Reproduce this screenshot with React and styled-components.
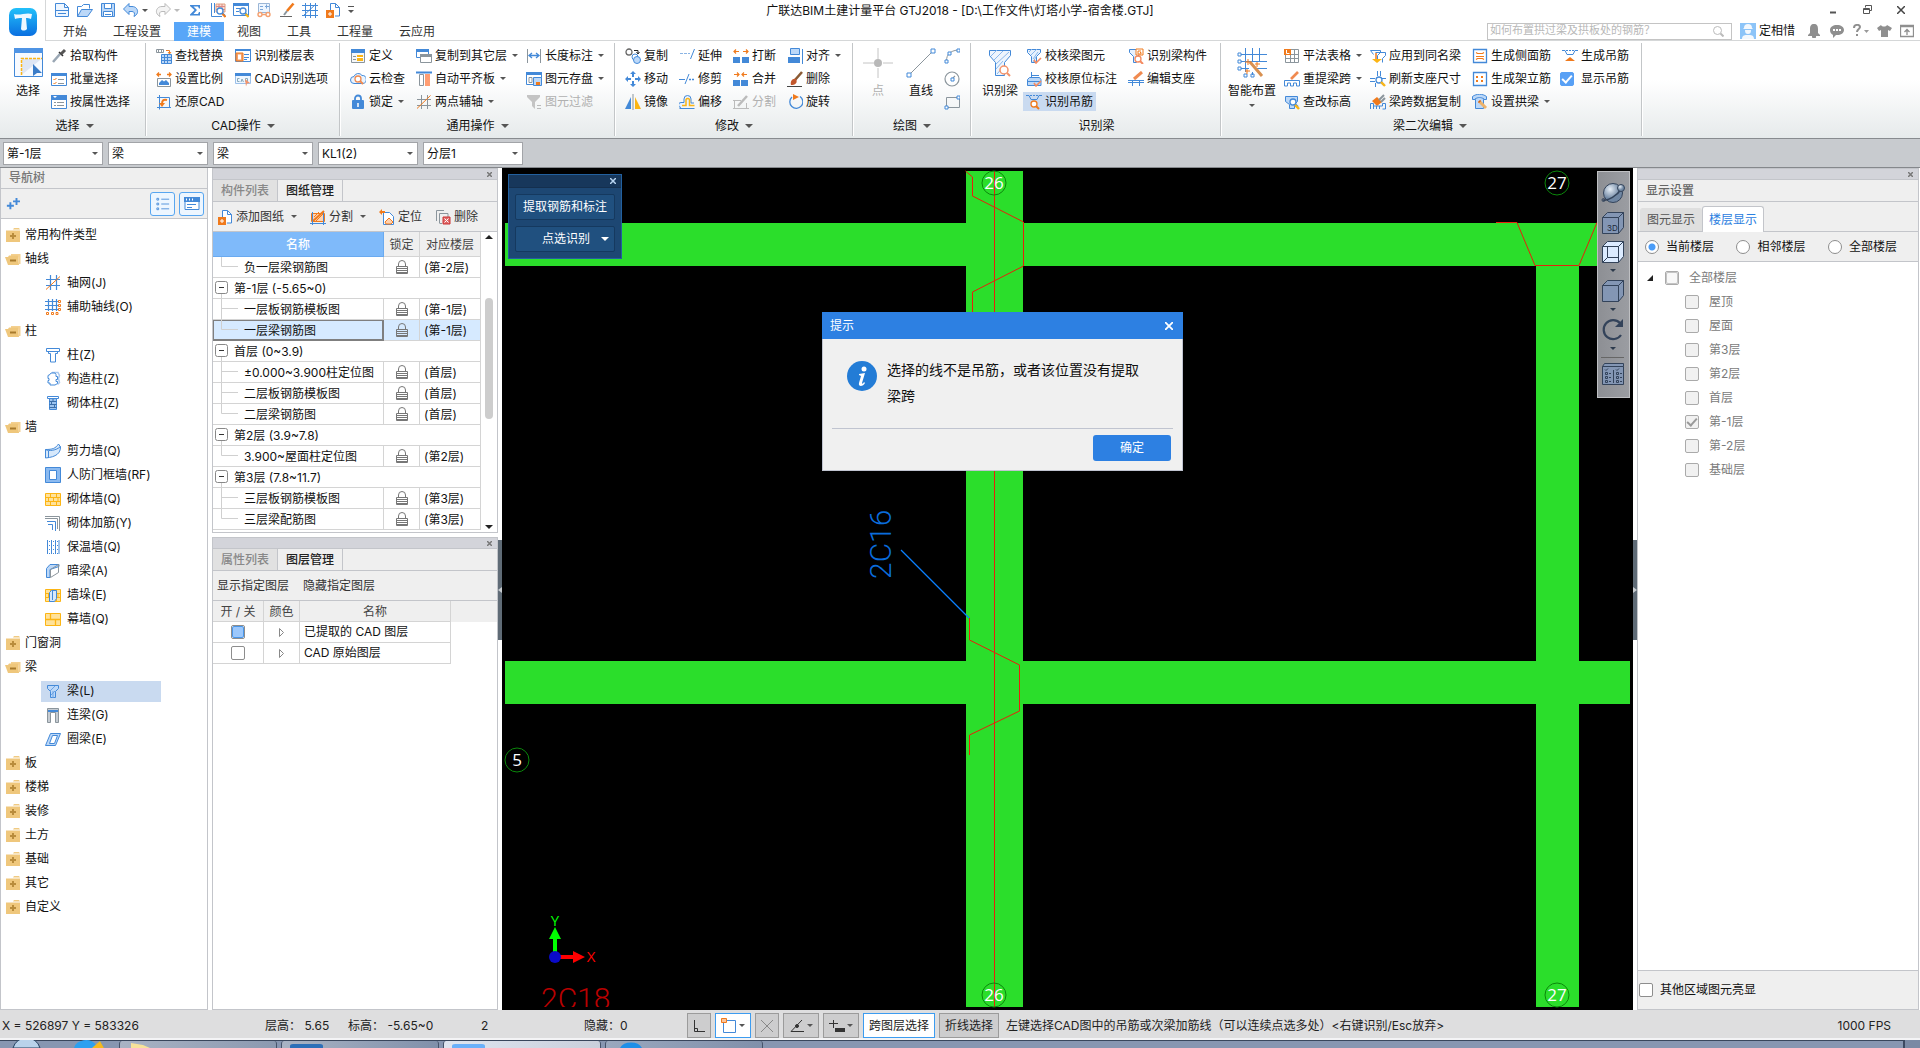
import React from "react";
import styled, { createGlobalStyle, css } from "styled-components";

const GlobalStyle = createGlobalStyle`
  * { box-sizing: border-box; }
  html, body { margin: 0; padding: 0; }
  body, button, input, select, table {
    font-family: Inter, "Noto Sans CJK SC", sans-serif;
    font-size: 12px;
    line-height: 16px;
    color: #111;
  }
  button { background: none; border: 0; padding: 0; white-space: nowrap; }
  ul { list-style: none; margin: 0; padding: 0; }
`;

const B = "#4389d8";
const L = "#bcd8f8";
const O = "#f07a1c";
const G = "#8b959c";
const K = "#33435a";
const Y = "#fcb514";

const line = (d, stroke = B, width = 1) => (
  <path d={d} stroke={stroke} strokeWidth={width} fill="none" />
);
const shape = (d, fill = B, stroke = "none") => (
  <path d={d} fill={fill} stroke={stroke} />
);
const magnifier = (x, y, color = O) => (
  <>
    <circle cx={x} cy={y} r="3" fill="#fff" stroke={color} strokeWidth="1.3" />
    <path d={`M${x + 2} ${y + 2}l3 3`} stroke={color} strokeWidth="2" />
  </>
);
const cube = (face) => (
  <>
    {shape("M1.5 6.5l5-5h16l-5 5z", face, K)}
    {shape("M17.5 6.5l5-5v15l-5 6z", face, K)}
    {shape("M1.5 6.5h16v16h-16z", face, K)}
  </>
);
const bricks = (
  <>
    {shape("M.5 2.5h15v12H.5z", "#ffe29a", Y)}
    {line("M.5 6.5h15M.5 10.5h15M5.5 2.5v4M11.5 2.5v4M3.5 6.5v4M8.5 6.5v4M13 6.5v4M5.5 10.5v4M11.5 10.5v4", Y)}
  </>
);

const icons = {
  newFile: <>{shape("M1.5 1.5h9l4 4v9h-13z", "#eef6ff", B)}{line("M10.5 1.5v4h4M1.5 8.5h13M4 11.5h8")}</>,
  open: <>{shape("M.5 14.5v-10h4l2-2h6v4", "#fff", B)}{shape("M.5 14.5l4-7h11l-5 7z", L, B)}</>,
  save: <>{shape("M1.5 1.5h13v13h-13z", L, B)}{shape("M4.5 1.5h7v5h-7zM3.5 9.5h9v5h-9z", "#fff", B)}{line("M5 12.5h6")}</>,
  undo: <>{shape("M6 1.5v3h3c4 0 6 3 5.500 6-.5 2-2 3-3.500 4 1-3 .5-5-2-5H6v3L.5 7z", L, B)}</>,
  redo: <>{shape("M10 1.500v3H7c-4 0-6 3-5.500 6 .5 2 2 3 3.500 4-1-3-.5-5 2-5h3v3L15.500 7z", "#f4f4f4", "#bbb")}</>,
  sigma: shape("M3 3h10v3.500h-1l-1-2H6.500l3.500 3.500-3.500 4H11l1-2h1v3.500H3v-1l4.500-4.500L3 4z"),
  sheetFind: <>{line("M1.500 1v13.500H12M4.500 1v10")}{shape("M6 2h9v8H6z", "#f7ded0", "#e0a080")}{line("M6 4.500h9M6 7.500h9M9 2v8M12 2v8", "#d88")}{magnifier(10, 9, B)}{line("M12.500 12l3 3", O, 2)}</>,
  windowFind: <>{shape("M.5 1.500h15v12H.5z", "#fff", B)}{shape("M0 1h16v3H0z")}{line("M3 6.500h4M3 9.500h3")}{magnifier(10, 9, B)}{line("M12.500 12l3 3", Y, 2)}</>,
  glasses: <>{shape("M2.500 1.500h11v9h-11z", "#eef6ff", "#9bb6d6")}{line("M4 4.500h3M9 4.500h4M4 7.500h3M10.500 2.500v4", "#7aa6d8")}{line("M2 12.500a2 2 0 104 0 2 2 0 10-4 0M10 12.500a2 2 0 104 0 2 2 0 10-4 0M6 12.500h4", "#f4a070", 1.400)}</>,
  brush: <>{line("M14.500 1.500L8 9", O, 2.600)}{line("M8 9l-3 4", G, 2)}{line("M1 14.500h12", "#666")}</>,
  grid: <>{line("M3.500 1v15M8.500 1v15M13.500 1v15M0 3.500h16M0 8.500h16M0 13.500h16M1 14L14 2")}</>,
  addPage: <>{shape("M5.500 9v-7.500h5l4 4v8.500H10", "#fff", B)}{line("M10.500 1.500v4h4")}{shape("M1 8h8v8H1z", O)}{line("M5 10v4M3 12h4", "#fff")}</>,
  pipette: <>{line("M2 14l7-8", "#9aa7b4", 2.500)}{line("M8 4l4 4", "#333", 1.600)}{line("M10 6l4-4", "#555", 3)}</>,
  batch: <>{shape("M.5 2.500h15v12H.5z", "#fff", B)}{shape("M0 2h16v3H0z")}{line("M2.500 8l1 1 2-2M2.500 12l1 1 2-2", O)}{line("M7 8.500h6M7 12.500h6", G)}</>,
  attribute: <>{shape("M.5 1.500h15v13H.5z", "#fff", B)}{shape("M0 1h16v5H0z")}{shape("M2 2h4l-2 2z", "#fff")}{line("M3 8.500h2M3 11.500h2M6 8.500h7M6 11.500h7", G)}</>,
  findReplace: <>{line("M.5 1.500h7v3h-7zM2.500 1.500v3M5.500 1.500v3", G)}{line("M10 2.500h3.500v3M12 4l1.500 2L15 4", O)}{shape("M5.500 6.500h10v9h-10z", L, B)}{line("M8.500 7v8M11.500 7v8M6 9.500h9M6 12.500h9")}</>,
  scale: <>{line("M1 3.500h4M3 1.500l-2 2 2 2M15 3.500h-4M13 1.500l2 2-2 2", O, 1.300)}{shape("M1.500 7.500h13v8h-13z", "#fff", G)}{shape("M3 14v-2l3-3 2 1.500L10 9l3 3v2z")}</>,
  restore: <>{line("M3.500 1v14.500M1 3.500h12.500v10M1 13.500h14")}{line("M6 10c0-4 2-5 5-4", O, 2)}{shape("M3 9h6l-3 4z", O)}</>,
  floorTable: <>{shape("M.5 1.500h15v12H.5z", "#fff", B)}{shape("M0 1h16v2H0z")}{shape("M1 5h7v8H1z", "#f4a06c", O)}{shape("M3 6.500h3v5H3z", "#fff")}{line("M9 6.500h5M9 9.500h5M9 11.500h3")}</>,
  cadOption: <>{shape("M.5 2.500h15v10H.5z", "#eef6ff", "#9cc0ea")}{shape("M0 2h16v3H0z")}{line("M4.500 7.500h-2v3h2M6 11l1-3 1.500 3M10.500 7.500v3h2v-3z", "#8ab")}{shape("M10 8l5 4-3 .5-1 3z", "#f4936a")}</>,
  define: <>{shape("M1.500 2.500h13v12h-13z", "#f4f7fa", G)}{shape("M1 1h14v4H1z")}{line("M3 8.500h3M3 11.500h3", G)}{shape("M7 7h6v6H7z", Y)}{line("M7 9.500h6", "#fff")}</>,
  cloud: <>{shape("M4 12.500a3.500 3.500 0 010-7 4.500 4.500 0 018-1 4 4 0 01.5 8z", "#e9f4ff", B)}{magnifier(8, 8, "#f08a50")}</>,
  lock: <>{line("M5 7V4.500a3 3 0 016 0V7", B, 1.800)}{shape("M3 6h10a1 1 0 011 1v7a1 1 0 01-1 1H3a1 1 0 01-1-1V7a1 1 0 011-1z")}{line("M8 9v4", "#fff", 1.500)}</>,
  copyFloor: <>{shape("M.5 1.500h12v8H.5z", "#fff", B)}{shape("M0 1h13v3H0z")}{shape("M4.500 6.500h11v8h-11z", "#fff", G)}{shape("M4 6h12v3H4z", G)}</>,
  alignSlab: <>{line("M0 1.500h16", B, 2)}{line("M3.500 3.500h4v11h-4z", G)}{shape("M9 3h5v12H9z", "#ff9d72")}</>,
  auxAxis: <>{line("M5.500 1v14M11.500 1v14M1 5.500h14M1 11.500h14", G)}{line("M1 14.500L14.500 1.500", O)}</>,
  dimension: <>{line("M1.500 1v14M14.500 1v14", G)}{line("M3 7.500h10M6 5L3 7.500 6 10M10 5l3 2.500-3 2.500", B, 1.300)}</>,
  saveElement: <>{shape("M.5 1.500h15v12H.5z", "#fff", B)}{shape("M0 1h16v3H0z")}{line("M3 6.500h3v5H3z", G)}{shape("M7.500 6.500h8v8h-8z", L, B)}{shape("M10 11h4v3h-4z", O)}</>,
  filter: <>{shape("M1 1h13v2L9 8v7l-3-3V8L1 3z", "#c4c4c4")}{line("M11 11.500h4M11 14.500h4", "#bbb")}</>,
  copy: <>{line("M1 4a3 3 0 106 0 3 3 0 10-6 0", "#666", 1.300)}{line("M9 2.500h4v3M11.500 4L13 6l1.500-2", "#222")}<circle cx="10" cy="9" r="3" fill="#fff" stroke={B} /><circle cx="12" cy="12" r="3.500" fill={L} stroke={B} /></>,
  move: <>{line("M8 2v4M8 10v4M2 8h4M10 8h4", B, 2)}{shape("M8 0l3 3H5zM8 16l3-3H5zM0 8l3-3v6zM16 8l-3-3v6z")}</>,
  mirror: <>{shape("M6 3v12H0z")}{shape("M10 3v12h6z", Y)}{line("M8 0v16", G)}</>,
  extend: <>{line("M0 5.500h11", "#8ab4e4")}<path d="M0 5.500h12" stroke="#fff" strokeDasharray="1 3" />{line("M15.500 1l-4 10")}</>,
  trim: <>{line("M0 8.500h6M6 13L10 3")}<path d="M10 8.500h6" stroke={B} strokeWidth="1.500" strokeDasharray="2 1" /></>,
  offset: <>{shape("M2 13.500a2 2 0 010-5h3V5a3.500 3.500 0 017 0v4h3M.5 14.500h15", "#eaf3ff", B)}{line("M3 11.500h4V5.500a2 2 0 013.500 0v6h5", Y, 1.500)}</>,
  breakIt: <>{shape("M0 9h7v6H0zM9 9h7v6H9z")}{line("M1 3.500h5M3 1.500l-2 2 2 2M15 3.500h-5M13 1.500l2 2-2 2", O, 1.200)}</>,
  merge: <>{shape("M0 9h7v6H0zM8 9h7v6H8z")}{line("M1 3.500h5M4 1.500l2 2-2 2M14 3.500H9M11 1.500l-2 2 2 2", O, 1.200)}</>,
  split: <>{line("M1.500 6v8.500h12V9M0 14.500h16M0 6.500h8", "#bbb")}{line("M5 12l9-10", "#bbb", 2.500)}</>,
  alignTo: <>{shape("M3.500 .500h9v6h-9z", L, B)}{shape("M1 9h12v6H1z")}{line("M15.500 1v15")}</>,
  erase: <>{line("M15 1L8 9", "#8a5a33", 2.500)}{shape("M9 8c-4-1-6 3-5 6 4 0 7-2 5-6z", "#c2562c")}{line("M0 15.500h15", "#444")}</>,
  rotate: <>{line("M5 3a6.500 6.500 0 108-.5", B, 1.300)}{shape("M6 0l6 3-6 3z", O)}</>,
  arc: <>{line("M2.500 13c0-7 4-10 11-11", G)}{shape("M1 12h3v3H1zM4 4h3v3H4zM13 1h3v3h-3z", "#fff", B)}</>,
  circle: <>{line("M1 8a7 7 0 1014 0A7 7 0 101 8M8 8l3-3", G, 1.200)}{shape("M7 7h3v3H7z", "#fff", B)}</>,
  rect: <>{line("M2.500 3.500h13v10h-13z", G)}{shape("M1 12h3v3H1zM13 2h3v3h-3z", "#fff", B)}</>,
  checkBeam: <>{shape("M1.500 1.500h13v3l-4 4v6h-5v-6l-4-4z", "#e6f1fd", B)}{line("M3 4l3-3M5 7l6-6M7 11l5-7M7 14l3-5", "#8ab8ec")}{line("M8 12l2 3 5-5", "#f48a60", 1.600)}</>,
  checkLabel: <>{line("M5.500 7V1M5 4.500h8")}{shape("M1.500 8.500l2-2h10l1.500 2v6h-13.500z", L, B)}{line("M1 10.500h13")}{line("M8 12l2 3 5-5", "#f48a60", 1.600)}</>,
  findRebar: <>{line("M0 1.500h3l2 4h6l2-4h3")}<path d="M4 1.500h9" stroke={B} strokeDasharray="2 1" />{magnifier(8, 10)}</>,
  beamComp: <>{shape("M1.500 1.500h9v8l-2 5h-3v-6l-4-4z", "#e6f1fd", B)}{shape("M8 1h7v6H8z", "#fff", O)}{line("M13 3h-3v3h3V4.500h-1", O)}{magnifier(10, 11, "#f48a60")}</>,
  editSupport: <>{line("M14 1L6 8", "#f08a50", 3)}{line("M0 9.500h16M0 11.500h16M4.500 9v6M11.500 9v6")}</>,
  tableL: <>{shape("M1.500 1.500h13v13h-13z", "#fff", G)}{line("M6.500 7v8M10.500 2v12M2 6.500h12M2 10.500h12", G)}{shape("M0 1h7v6H0z", O)}{line("M2.500 2v3.500h3", "#fff")}</>,
  respan: <>{line("M14 1L7 8", "#f08a50", 2.600)}{line("M.5 15V9.500h15V15h-3v-3h-3v3h-3v-3h-3v3z")}</>,
  checkHeight: <>{shape("M1.500 2.500h12v5l-3 3v4h-5v-4l-4-3z", L, B)}{magnifier(9, 8, B)}{line("M11 11l4 4", Y, 2.400)}</>,
  applySame: <>{line("M.5 2.500h10v2l-3 3v5M5.500 4.500h10v3l-3 3v4M.5 2.500l3 4")}{shape("M2 11h10l-5 4z", Y)}{line("M6 5v6", O, 1.500)}</>,
  refresh: <>{line("M7.500 0v5M10.500 0v5M0 7.500h5M0 10.500h5M12 7.500h4M5.500 12v4")}{magnifier(9, 9, B)}{line("M11 11l4 4", Y, 2.400)}</>,
  spanCopy: <>{shape("M2 7l5-4 5 5-5 4z", O)}{line("M9 6l5-5M11 8l4-4", G, 2)}{line("M.5 15V9.500h3V12h9V9.500h3V15h-3M3.500 15v-3M6.500 12v3M9.500 12v3")}</>,
  sideRebar: <>{line("M1.500 1.500h13v13h-13z", B, 1.300)}{line("M4 4.500l1.500 1h5l1.500-1M4 8.500h8M4 11.500l1.500-1h5l1.500 1", O, 1.200)}</>,
  topRebar: <>{line("M1.500 1.500h13v13h-13z", B, 1.300)}{shape("M4 5h2v2H4zM9 5h2v2H9zM4 9h2v2H4zM9 9h2v2H9z", O)}</>,
  arch: <>{shape("M.5 5.500v-3c4-3 10-3 14 0v3h-3v9h-8v-9z", L, B)}{line("M3 5c3-2 6-2 9 0")}{line("M7 7l7 7", "#eeb36a", 3)}{line("M7 7l1 1", "#d2601a", 3)}</>,
  hangRebar: <>{line("M0 2.500h3l2 4h6l2-4h3")}<path d="M4 2.500h9" stroke={B} strokeDasharray="2 1" />{shape("M8 9l5 4H3z", O)}</>,
  splitPaper: <>{shape("M1.500 4.500h13v8h-13z", "#ffd2b0", O)}{line("M0 14.500h16M2.500 3v13M13.500 3v13")}{line("M3 12L14 2", O, 2)}{line("M4 8l5-5M6 12l7-7", O)}</>,
  locate: <>{shape("M4.500 3.500h6l4 4v8h-10z", "#fff", B)}{shape("M0 3l3-3v2h3v2H3v2z", O)}{shape("M6 13l4-4 4 4-2 2H7z", "#ffd2b0", O)}</>,
  removePaper: <>{line("M1.500 12V1.500H9M4.500 14V4.500H13V8M4.500 14.500H7", G)}{shape("M8 8h7v7H8z", "#e06a6a", "#c33")}{line("M9.500 9.500l4 4M13.500 9.500l-4 4", "#fff")}</>,
  folderPlus: <>{shape("M8 2.500l1-1.500h5l1 1.500z", "#f0ca82")}{shape("M1 3.500h14V15H1z", "#efc77c")}{line("M8 6v6M5 9h6", "#b98c3c", 2)}</>,
  folderMinus: <>{shape("M6 3h9.500v10H14l-1-8H6z", "#f4d090")}{shape("M0 6h3l1-1.500h9l1 9.500H3z", "#efc77c")}{line("M5 9.500h6", "#a87a2c", 2)}</>,
  axisNet: <>{line("M5.500 0v15M11.500 0v15M1 4.500h14M1 10.500h14", B, 1.200)}{line("M1 14.500L15 1.500", O)}</>,
  auxNet: <>{line("M3.500 0v12M7.500 0v12M11.500 0v12M0 2.500h13M0 6.500h13M0 10.500h13", B, 1.200)}{line("M13.500 1.500h2v2h-2zM13.500 5.500h2v2h-2zM13.500 9.500h2v2h-2zM1.500 13.500h2v2h-2zM6.500 13.500h2v2h-2zM11 13.500h2v2h-2z", O)}</>,
  column: <>{line("M1.500 1.500h13v3h-13zM3.500 4.500h9v2h-2v8.500h-5V6.500h-2z")}</>,
  structColumn: <>{line("M7 1.500h6l1.500 3-1 3 1 4-2 2", "#a8c8ee", 1.500)}{shape("M5 3.500L6 2h4l1 1.500v2h1.500v3H11v2h1.500v2L10 14H5v-2H3V9.500h1v-2H3v-3z", "#fff", B)}</>,
  brickColumn: <>{line("M2.500 1.500h11v2h-11z")}{shape("M4.500 3.500h7v11h-7z", "#9cc4f0", B)}{line("M4.500 6.500h7M4.500 9.500h7M4.500 12.500h7M8 4v3M6.500 7v3M9.500 10v3", "#3b6ea8")}</>,
  shearWall: <>{shape("M.5 6.500c7 0 10-1 13-5.500l2 3c0 6-4 10-15 11z", "#d6e8fb", B)}{line("M.5 6.500c3 2 11 1 15-3M3.500 8v7")}</>,
  frameWall: <>{shape("M.5 .500h15v15H.5z", "#8bbaf0", B)}{shape("M4.500 3.500h7v9h-7z", "#fff", B)}</>,
  brickWall: bricks,
  wallRebar: <>{line("M0 1.500h14.500V16M0 3.500h12.500V14", G)}{line("M2 6.500h8.500V16M3 9.500h4.500V15")}</>,
  insulWall: <>{line("M2.500 1v14M6.500 1v14M10.500 1v14M14 1v14")}<path d="M4.500 2v13M8.500 2v13M12.500 2v13" stroke={B} strokeDasharray="1 3" /></>,
  hiddenBeam: <>{shape("M1.500 5.500L5 1.500h9v2l-9 3v8l-3.500 0z", L, B)}{line("M5.500 6.500l8-5v8l-8 5z", G)}</>,
  wallPier: <>{bricks}{shape("M4.500 5.500l2-2h5v8l-2 3h-5z", "#d6e8fb", B)}{line("M7.500 4v9")}</>,
  curtain: <>{shape("M.5 2.500h15v12H.5z", "#ffe29a", Y)}{line("M.5 8.500h15M5.500 2.500v6M10.500 8.500v6", Y, 1.300)}</>,
  beam: <>{shape("M2.500 2.500h11v3l-3 3v6h-5v-6l-3-3z", L, B)}{line("M5 8l5-5M6 12l4-4M8 8v7", "#6aa2e4")}</>,
  linkBeam: <>{shape("M2.500 1.500h11v14h-3v-10h-5v10h-3z", "#c6ccd2", G)}{shape("M3 3h10v2H3z", B)}</>,
  ringBeam: <>{shape("M5.500 2.500h10l-5 12H.5z", L, B)}{shape("M7.500 4.500h5l-3 8h-5z", "#fff", B)}</>,
  plusPlus: <>{line("M5 6v8M1 10h8M12 1v8M8 5h8", B, 2.200)}</>,
  listView: <>{line("M1 1.500h2v2H1zM1 7h2v2H1zM1 12.500h2v2H1zM6 2.500h9M6 8h9M6 13.500h9")}</>,
  cardView: <>{shape("M1 1.500h14v12H1z", "#fff", B)}{shape("M0 1h16v5H0z")}{line("M2 3.500h1M5 3.500h1M8 3.500h1", "#fff", 2)}{line("M3 8.500h9M3 11.500h5")}</>,
};

const Icon = ({ name, size = 16 }) => (
  <svg width={size} height={size} viewBox="0 0 16 16" fill="none" aria-hidden="true">
    {icons[name]}
  </svg>
);

const Caret = styled.i`
  flex: none;
  width: 0;
  height: 0;
  border: ${(p) => p.$size || 3}px solid transparent;
  border-top-color: ${(p) => p.$color || "#555"};
  border-bottom: 0;
`;

/* ---------- window header ---------- */

const Page = styled.div`
  display: flex;
  flex-direction: column;
  height: 100vh;
  overflow: hidden;
  background: #fff;
`;

const Header = styled.header`
  flex: none;
  display: grid;
  grid-template-columns: 46px 1fr auto 1fr 46px;
  grid-template-rows: 22px 19px;
`;

const Logo = styled.div`
  grid-row: span 2;
  display: flex;
  align-items: center;
  justify-content: center;
  padding-top: 3px;
  border-right: 1px solid #d5d7d8;
`;

const QuickBar = styled.div`
  display: flex;
  align-items: center;
  gap: 7px;
  padding: 0 0 2px 8px;
`;

const QuickButton = styled.button`
  display: flex;
  align-items: center;
  gap: 3px;
`;

const Title = styled.h1`
  margin: 0;
  font-size: 12px;
  font-weight: 400;
  line-height: 22px;
`;

const WindowControls = styled.div`
  grid-column: 4 / 6;
  display: flex;
  justify-content: flex-end;
  padding-right: 2px;

  button {
    width: 34px;
    height: 20px;
  }
`;

const TabRow = styled.div`
  grid-column: 2 / 6;
  display: flex;
  justify-content: space-between;
  border-bottom: 1px solid #d5d7d8;
  padding-right: 6px;
`;

const Tabs = styled.nav`
  display: flex;
  padding-left: 4px;
`;

const Tab = styled.button`
  height: 19px;
  padding: 0 13px;
  color: ${(p) => (p.$active ? "#fff" : "#333")};
  background: ${(p) => (p.$active ? "#58a6f8" : "none")};
`;

const Tools = styled.div`
  display: flex;
  align-items: center;
  gap: 8px;
`;

const SearchBox = styled.label`
  display: flex;
  align-items: center;
  width: 245px;
  height: 17px;
  padding-right: 7px;
  border: 1px solid #c4c4c4;

  input {
    flex: 1;
    min-width: 0;
    height: 15px;
    padding: 0 2px 3px;
    border: 0;
    outline: 0;
    font-size: 11px;
    background: none;
  }
  input::placeholder {
    color: #b8b8b8;
  }
`;

const User = styled.a`
  display: flex;
  align-items: center;
  gap: 3px;
  margin-right: 4px;
  color: #111;
  text-decoration: none;
`;

/* ---------- ribbon ---------- */

const Ribbon = styled.section`
  flex: none;
  display: flex;
  height: 98px;
  padding: 2px 0 2px;
  background: linear-gradient(#fff 0%, #fff 40%, #e6eaeb 100%);
  border-bottom: 1px solid #888b8f;
`;

const Group = styled.div`
  display: flex;
  flex-direction: column;
  min-width: ${(p) => p.$width}px;
  padding-left: ${(p) => p.$indent || 7}px;
  border-right: 1px solid #c3c6c8;
  box-shadow: 1px 0 #fff;
`;

const GroupBody = styled.div`
  display: flex;
  gap: 2px;
  padding-top: 1px;
`;

const Columns = styled.div`
  display: flex;
  gap: 5px;
`;

const Column = styled.div`
  display: grid;
  grid-auto-rows: 23px;
  align-items: center;
  justify-items: start;
`;

const SmallButton = styled.button`
  display: flex;
  align-items: center;
  gap: 3px;
  height: 19px;
  padding: 0 ${(p) => (p.$menu ? 0 : 3)}px 0 3px;
  color: ${(p) => (p.disabled ? "#b0b0b0" : "#111")};
  background: ${(p) => (p.$active ? "#c9daf0" : "none")};

  i {
    margin-left: 2px;
  }
`;

const BigButton = styled.button`
  display: flex;
  flex-direction: column;
  align-items: center;
  gap: 5px;
  align-self: flex-start;
  padding: 4px 3px 0;
  color: ${(p) => (p.disabled ? "#b0b0b0" : "#111")};

  & + & {
    margin-left: 5px;
  }
`;

const GroupLabel = styled.div`
  flex: 1;
  display: flex;
  align-items: center;
  justify-content: center;
  gap: 6px;
  padding: 2px 6px 0 0;
`;

const CheckItem = styled.label`
  display: flex;
  align-items: center;
  gap: ${(p) => p.$gap || 7}px;
  padding: 0 1px;
  color: ${(p) => (p.$muted ? "#7b7b7b" : "#111")};
`;

const CheckBox = styled.input.attrs({ type: "checkbox" })`
  appearance: none;
  display: grid;
  place-items: center;
  flex: none;
  width: 14px;
  height: 14px;
  margin: 0;
  border: 1px solid #8d8d8d;
  border-radius: 2px;
  background: ${(p) => (p.disabled ? "#f1f1f1" : "#fff")};

  &:disabled {
    border-color: #aaa;
  }
  &:checked::after {
    content: "";
    width: 8px;
    height: 4px;
    margin-top: -2px;
    border: solid #999;
    border-width: 0 0 2px 2px;
    transform: rotate(-48deg);
  }
  ${(p) =>
    p.$solid &&
    css`
      background: #58a0f5;
      border-color: #58a0f5;
      &:checked::after {
        border-color: #fff;
      }
    `}
  ${(p) =>
    p.$partial &&
    css`
      &::before {
        content: "";
        width: 10px;
        height: 10px;
        border: 1px solid ${p.disabled ? "#c4c4c4" : "#4a97ea"};
        border-radius: 2px;
        background: ${p.disabled ? "#f8f8f8" : "#9cc8fc"};
      }
    `}
`;

const ComboBar = styled.div`
  flex: none;
  display: flex;
  gap: 5px;
  height: 29px;
  padding: 3px 3px 0;
  background: #c8cbcf;
  border-bottom: 1px solid #85888c;
`;

const Combo = styled.label`
  display: flex;
  align-items: center;
  width: 100px;
  height: 23px;
  padding-right: 4px;
  background: #fff;
  border: 1px solid #a2a4a8;

  select {
    flex: 1;
    min-width: 0;
    appearance: none;
    height: 21px;
    padding: 0 3px;
    border: 0;
    background: none;
  }
`;

/* ---------- docked panels ---------- */

const Main = styled.main`
  flex: 1;
  min-height: 0;
  display: flex;
`;

const NavPanel = styled.aside`
  flex: none;
  width: 208px;
  margin-right: 4px;
  border: solid #c3c5ca;
  border-width: 0 1px 1px;
`;

const NavTitle = styled.div`
  height: 21px;
  padding: 2px 8px;
  color: #777;
  font-weight: 500;
  background: #efefef;
  border-bottom: 1px solid #c3c5ca;
`;

const NavTools = styled.div`
  display: flex;
  align-items: center;
  gap: 4px;
  height: 30px;
  padding: 0 3px 0 5px;
  background: #efefef;
  border-bottom: 1px solid #c3c5ca;

  button:first-child {
    display: flex;
    margin-right: auto;
  }
`;

const ViewButton = styled.button`
  display: flex;
  align-items: center;
  justify-content: center;
  width: 25px;
  height: 24px;
  border: 1px solid #58a6f0;
  border-radius: 3px;
  background: #edf6ff;
`;

const Tree = styled.ul`
  padding-top: 4px;
`;

const TreeRow = styled.li`
  display: flex;
  align-items: center;
  height: 24px;
  padding-left: ${(p) => (p.$leaf ? 40 : 3)}px;

  span {
    display: flex;
    align-items: center;
    gap: ${(p) => (p.$leaf ? 6 : 4)}px;
    height: 21px;
    width: ${(p) => (p.$leaf ? 120 : 160)}px;
    padding-left: ${(p) => (p.$leaf ? 4 : 1)}px;
    background: ${(p) => (p.$active ? "#c9daf0" : "none")};
  }
`;

const DockColumn = styled.div`
  flex: none;
  display: flex;
  flex-direction: column;
  gap: 4px;
  width: 286px;
`;

const Dock = styled.section`
  display: flex;
  flex-direction: column;
  flex: ${(p) => (p.$fill ? 1 : "none")};
  min-height: 0;
  border: 1px solid #c3c5ca;
  background: #fff;
`;

const DockStrip = styled.div`
  display: flex;
  justify-content: flex-end;
  align-items: center;
  height: 11px;
  padding-right: 5px;
  background: #d3d4da;
  border-bottom: 1px solid #c3c5ca;

  button {
    display: flex;
  }
`;

const DockTabs = styled.div`
  display: flex;
  height: 22px;
  background: #efefef;
  border-bottom: 1px solid #c3c5ca;
`;

const DockTab = styled.button`
  padding: 0 8px;
  width: 65px;
  border-right: 1px solid #c3c5ca;
  color: ${(p) => (p.$active ? "#222" : "#888")};
  font-weight: 500;
  background: ${(p) => (p.$active ? "#efefef" : "#e1e1e1")};
`;

const DockTools = styled.div`
  display: flex;
  align-items: center;
  gap: ${(p) => p.$gap}px;
  height: 30px;
  padding: 0 4px;
  background: #efefef;
  border-bottom: 1px solid #c3c5ca;

  button {
    display: flex;
    align-items: center;
    gap: 3px;
    color: #333;
  }
  i {
    margin-left: 4px;
  }
`;

const TableArea = styled.div`
  display: flex;
  padding-bottom: 2px;
`;

const DataTable = styled.table`
  table-layout: fixed;
  width: ${(p) => p.$width}px;
  border-collapse: separate;
  border-spacing: 0;

  th,
  td {
    height: 21px;
    padding: 0;
    border: solid #d4d4d4;
    border-width: 0 1px 1px 0;
    white-space: nowrap;
  }
  th {
    height: ${(p) => p.$head}px;
    padding-top: 2px;
    color: #444;
    font-weight: 400;
    background: #efefef;
  }
  svg {
    display: block;
    margin: 0 auto;
  }
`;

const SortedTh = styled.th`
  && {
    color: #fff;
    font-weight: 500;
    background: #7fbafa;
    border-color: #6aaaf0;
  }
`;

const DrawingRow = styled.tr`
  background: ${(p) => (p.$active ? "#d6eaff" : "#fff")};

  && td:last-child {
    padding: ${(p) => (p.$group ? "0" : "2px 0 0 4px")};
  }
  td:first-child {
    ${(p) => p.$active && "box-shadow: inset 0 0 0 1px #7f7f7f; border-color: #7f7f7f;"}
  }
`;

const NameCell = styled.div`
  display: flex;
  align-items: center;
  gap: 6px;
  height: 20px;
  padding-left: 2px;

  svg {
    margin: 0;
  }
  span {
    padding-top: 2px;
  }
`;

const Gutter = styled.div`
  flex: 1;
  display: flex;
  flex-direction: column;
  align-items: center;
  justify-content: space-between;
  padding: 3px 0 1px;
  background: #fff;
`;

const Thumb = styled.div`
  width: 8px;
  height: 121px;
  margin-top: -48px;
  border-radius: 4px;
  background: #cdcdcd;
`;

const LayerHead = styled.div`
  display: flex;
  align-items: flex-start;
  background: linear-gradient(#efefef 21px, #fff 21px);
`;

const Cell = styled.div`
  display: flex;
  align-items: center;
  justify-content: ${(p) => (p.$start ? "flex-start" : "center")};
  padding-left: ${(p) => (p.$start ? 4 : 0)}px;
`;

const Splitter = styled.div`
  flex: none;
  align-self: flex-start;
  display: flex;
  align-items: center;
  width: 4px;
  height: 100px;
  margin-top: 372px;
  background: #5f6b76;
`;

/* ---------- canvas ---------- */

const Canvas = styled.section`
  position: relative;
  flex: 1;
  min-width: 0;
  overflow: hidden;
  background: #000;

  > svg {
    display: block;
    width: 100%;
    height: 100%;
  }
`;

const FloatPanel = styled.div`
  position: absolute;
  left: 6px;
  top: 6px;
  width: 114px;
  padding-bottom: 6px;
  background: #1d4773;
  border: 1px solid #22609f;
`;

const FloatHead = styled.div`
  display: flex;
  justify-content: flex-end;
  align-items: center;
  height: 13px;
  padding-right: 5px;
  margin-bottom: 6px;
  background: #17375b;
  border-bottom: 1px solid #142f4e;

  button {
    display: flex;
  }
`;

const FloatButton = styled.button`
  display: flex;
  align-items: center;
  justify-content: ${(p) => (p.$menu ? "flex-end" : "center")};
  gap: 11px;
  width: 100px;
  height: 26px;
  margin: 0 6px ${(p) => (p.$menu ? 0 : 6)}px;
  padding: 0 5px;
  color: #fff;
  background: #20507f;
  border: 1px solid #15395f;
  border-radius: 2px;
`;

const ViewBar = styled.div`
  position: absolute;
  right: 3px;
  top: 3px;
  display: flex;
  flex-direction: column;
  align-items: center;
  width: 33px;
  height: 227px;
  padding: 10px 2px 0 0;
  background: linear-gradient(90deg, #8d8f94, #9b9da2);
  border: 1px solid #bfc0c3;

  button {
    display: flex;
    flex-direction: column;
    align-items: center;
    height: 39px;
    gap: 5px;
  }
  button:nth-child(-n + 2) {
    height: 29px;
  }
`;

const ViewBarRule = styled.hr`
  width: 23px;
  margin: 0 0 4px;
  border: 0;
  border-top: 1px solid #666;
`;

const Dialog = styled.div`
  position: absolute;
  left: 320px;
  top: 144px;
  width: 361px;
  background: #f0f0f0;
  border: solid #c0c4d0;
  border-width: 0 1px 1px;
`;

const DialogHead = styled.div`
  display: flex;
  align-items: center;
  justify-content: space-between;
  height: 27px;
  margin: 0 -1px;
  padding: 0 10px 0 8px;
  color: #fff;
  background: #2d80e2;

  button {
    display: flex;
  }
`;

const DialogBody = styled.div`
  display: flex;
  gap: 10px;
  height: 90px;
  margin: 0 9px;
  padding: 18px 24px 0 15px;
  border-bottom: 1px solid #c0c4d0;

  svg {
    flex: none;
    margin-top: 4px;
  }
  p {
    width: 256px;
    margin: 0;
    font-size: 14px;
    line-height: 26px;
  }
`;

const DialogFoot = styled.div`
  display: flex;
  justify-content: flex-end;
  padding: 6px 11px 9px;

  button {
    width: 78px;
    height: 26px;
    color: #fff;
    background: #2d80e2;
    border-radius: 3px;
  }
`;

/* ---------- display settings ---------- */

const SettingPanel = styled(Dock)`
  flex: none;
  width: 282px;
  margin-right: 1px;
`;

const SettingTitle = styled.div`
  height: 22px;
  padding: 3px 8px;
  color: #666;
  font-weight: 500;
  background: #efefef;
  border-bottom: 1px solid #c3c5ca;
`;

const SettingTabs = styled.div`
  display: flex;
  align-items: flex-end;
  height: 30px;
  padding-left: 2px;
  background: #efefef;
  border-bottom: 1px solid #c3c5ca;
`;

const SettingTab = styled.button`
  height: ${(p) => (p.$active ? 26 : 23)}px;
  margin-bottom: ${(p) => (p.$active ? -1 : 0)}px;
  width: 62px;
  color: ${(p) => (p.$active ? "#2b80e0" : "#555")};
  background: ${(p) => (p.$active ? "#fff" : "#dfdfdf")};
  border: solid ${(p) => (p.$active ? "#c3c5ca" : "#dfdfdf")};
  border-width: 1px 1px 0;
  border-radius: 3px 3px 0 0;
`;

const RadioRow = styled.div`
  display: flex;
  align-items: center;
  justify-content: space-between;
  height: 30px;
  padding: 0 21px 0 7px;
  background: #efefef;
  border-bottom: 1px solid #c3c5ca;

  label {
    display: flex;
    align-items: center;
    gap: 7px;
  }
  input {
    appearance: none;
    width: 14px;
    height: 14px;
    margin: 0;
    border: 1px solid #8d8d8d;
    border-radius: 50%;
    background: #fff;
  }
  input:checked {
    background: radial-gradient(#4a9cf8 3px, #fff 4px);
  }
`;

const FloorTree = styled.ul`
  flex: 1;
  padding-top: 4px;

  li {
    display: flex;
    align-items: center;
    height: 24px;
    padding-left: 46px;
  }
  li:first-child {
    padding-left: 9px;
    gap: 11px;
  }
`;

const SettingFoot = styled.div`
  display: flex;
  align-items: center;
  height: 39px;
  background: #efefef;
  border-top: 1px solid #c3c5ca;
`;

/* ---------- bottom bars ---------- */

const StatusBar = styled.footer`
  flex: none;
  display: flex;
  align-items: center;
  gap: 4px;
  height: 28px;
  padding: 3px 29px 0 2px;
  color: #222;
  background: #dededf;
  white-space: nowrap;
`;

const StatusText = styled.span`
  width: ${(p) => (p.$width ? p.$width + "px" : "auto")};
  margin-left: ${(p) => (p.$push ? "auto" : "0")};
  padding-left: ${(p) => p.$indent || 0}px;
`;

const StatusButton = styled.button`
  display: flex;
  align-items: center;
  justify-content: center;
  gap: 2px;
  height: 25px;
  padding: 0 5px;
  color: #222;
  background: ${(p) => (p.$active ? "#fff" : "#cdcdce")};
  border: 1px solid ${(p) => (p.$active ? "#3c9cf0" : "#9b9b9b")};
`;

const TaskBar = styled.div`
  flex: none;
  display: flex;
  gap: 4px;
  height: 10px;
  padding-left: 119px;
  border-top: 2px solid #f4f4f6;
  background: #8796b1;
  box-shadow: inset 0 1px #39465c;
  position: relative;

  > svg {
    position: absolute;
    left: 0;
    top: 0;
  }
`;

const TaskItem = styled.div`
  width: 158px;
  margin-top: 1px;
  border: solid #46536a;
  border-width: 0 1px;
  border-radius: 3px 3px 0 0;
  background: linear-gradient(90deg, ${(p) => p.$from}, ${(p) => p.$to});
`;

const Desktop = styled.div`
  width: 17px;
  margin-left: auto;
  border-left: 2px solid #3c4961;
  background: #7a89a4;
`;

const CloseMark = ({ size = 5, color = "#777", width = 1.5 }) => (
  <svg width={size} height={size} viewBox="0 0 8 8">
    <path d="M0 0l8 8M8 0L0 8" stroke={color} strokeWidth={(width * 8) / size} />
  </svg>
);

const quickIcons = [
  ["newFile"], ["open"], ["save"], ["undo", "#555"], ["redo", "#bbb"], ["sigma"],
  ["sheetFind"], ["windowFind"], ["glasses"], ["brush"], ["grid"], ["addPage"],
];

const tabs = ["开始", "工程设置", "建模", "视图", "工具", "工程量", "云应用"];

const bigIcons = {
  select: (
    <>
      {shape("M1.500 1.500h28v27h-28z", "#f7faff", B)}
      {shape("M1 0h29v5H1z", "#4f94e4")}
      <path d="M8.500 27V10.500H29" stroke={Y} strokeWidth="1.500" strokeDasharray="3 1" fill="#dfe6f4" />
      {shape("M20 16l9 9-5 0-4 3z", "#3b7cc8")}
    </>
  ),
  point: <>{line("M15 0v11M15 20v10M0 15h11M20 15h10", "#c4c4c4")}<circle cx="15" cy="15" r="4" fill="#b8b8b8" /></>,
  line: <>{line("M3 27L27 3", G)}{shape("M1 25h4v4H1zM25 1h4v4h-4z", "#fff", B)}</>,
  beam: (
    <>
      {shape("M4.500 2.500h21v5l-6 7v13h-9v-13l-6-7z", "#eef5fd", B)}
      {line("M6 8l6-6M9 12l9-9M11 16L24 4M11 21l7-8M12 26l7-8", "#8ab8ec")}
      <circle cx="19" cy="22" r="4" fill="#fff" stroke="#f4936a" strokeWidth="1.500" />
      {line("M22 25l3 3", "#f4936a", 2)}
    </>
  ),
  smart: (
    <>
      {line("M8.500 0v24M15.500 0v14M22.500 0v14M4 6.500h26M4 13.500h26M4 20.500h8M20 20.500h10M15.500 24v3", B)}
      {line("M1 5h3v3H1zM1 12h3v3H1zM1 19h3v3H1zM7 26h3v3H7zM14 26h3v3h-3z", B)}
      {line("M13 14l12 14", "#d89050", 3)}
      {line("M11 11v6M8 14h6M10 21v5M8 23h5M20 14v5M18 16h5", O)}
    </>
  ),
};

const ribbonGroups = [
  {
    label: "选择", width: 146, indent: 10,
    big: [{ text: "选择", icon: "select" }],
    columns: [[["pipette", "拾取构件"], ["batch", "批量选择"], ["attribute", "按属性选择"]]],
  },
  {
    label: "CAD操作", width: 194,
    columns: [
      [["findReplace", "查找替换"], ["scale", "设置比例"], ["restore", "还原CAD"]],
      [["floorTable", "识别楼层表"], ["cadOption", "CAD识别选项"]],
    ],
  },
  {
    label: "通用操作", width: 275,
    columns: [
      [["define", "定义"], ["cloud", "云检查"], ["lock", "锁定", "menu"]],
      [["copyFloor", "复制到其它层", "menu"], ["alignSlab", "自动平齐板", "menu"], ["auxAxis", "两点辅轴", "menu"]],
      [["dimension", "长度标注", "menu"], ["saveElement", "图元存盘", "menu"], ["filter", "图元过滤", "disabled"]],
    ],
  },
  {
    label: "修改", width: 238,
    columns: [
      [["copy", "复制"], ["move", "移动"], ["mirror", "镜像"]],
      [["extend", "延伸"], ["trim", "修剪"], ["offset", "偏移"]],
      [["breakIt", "打断"], ["merge", "合并"], ["split", "分割", "disabled"]],
      [["alignTo", "对齐", "menu"], ["erase", "删除"], ["rotate", "旋转"]],
    ],
  },
  {
    label: "绘图", width: 118,
    big: [{ text: "点", icon: "point", disabled: true }, { text: "直线", icon: "line" }],
    columns: [[["arc", ""], ["circle", ""], ["rect", ""]]],
  },
  {
    label: "识别梁", width: 250, indent: 8, plain: true,
    big: [{ text: "识别梁", icon: "beam" }],
    columns: [
      [["checkBeam", "校核梁图元"], ["checkLabel", "校核原位标注"], ["findRebar", "识别吊筋", "active"]],
      [["beamComp", "识别梁构件"], ["editSupport", "编辑支座"]],
    ],
  },
  {
    label: "梁二次编辑", width: 421, indent: 4,
    big: [{ text: "智能布置", icon: "smart", menu: true }],
    columns: [
      [["tableL", "平法表格", "menu"], ["respan", "重提梁跨", "menu"], ["checkHeight", "查改标高"]],
      [["applySame", "应用到同名梁"], ["refresh", "刷新支座尺寸"], ["spanCopy", "梁跨数据复制"]],
      [["sideRebar", "生成侧面筋"], ["topRebar", "生成架立筋"], ["arch", "设置拱梁", "menu"]],
      [["hangRebar", "生成吊筋"], ["check", "显示吊筋"]],
    ],
  },
];

const combos = ["第-1层", "梁", "梁", "KL1(2)", "分层1"];

const navTree = [
  ["folderPlus", "常用构件类型"],
  ["folderMinus", "轴线"],
  ["axisNet", "轴网(J)", 1],
  ["auxNet", "辅助轴线(O)", 1],
  ["folderMinus", "柱"],
  ["column", "柱(Z)", 1],
  ["structColumn", "构造柱(Z)", 1],
  ["brickColumn", "砌体柱(Z)", 1],
  ["folderMinus", "墙"],
  ["shearWall", "剪力墙(Q)", 1],
  ["frameWall", "人防门框墙(RF)", 1],
  ["brickWall", "砌体墙(Q)", 1],
  ["wallRebar", "砌体加筋(Y)", 1],
  ["insulWall", "保温墙(Q)", 1],
  ["hiddenBeam", "暗梁(A)", 1],
  ["wallPier", "墙垛(E)", 1],
  ["curtain", "幕墙(Q)", 1],
  ["folderPlus", "门窗洞"],
  ["folderMinus", "梁"],
  ["beam", "梁(L)", 1],
  ["linkBeam", "连梁(G)", 1],
  ["ringBeam", "圈梁(E)", 1],
  ["folderPlus", "板"],
  ["folderPlus", "楼梯"],
  ["folderPlus", "装修"],
  ["folderPlus", "土方"],
  ["folderPlus", "基础"],
  ["folderPlus", "其它"],
  ["folderPlus", "自定义"],
];

const drawings = [
  { name: "负一层梁钢筋图", floor: "(第-2层)", last: true },
  { group: "第-1层 (-5.65~0)" },
  { name: "一层板钢筋模板图", floor: "(第-1层)" },
  { name: "一层梁钢筋图", floor: "(第-1层)", last: true, active: true },
  { group: "首层 (0~3.9)" },
  { name: "±0.000~3.900柱定位图", floor: "(首层)" },
  { name: "二层板钢筋模板图", floor: "(首层)" },
  { name: "二层梁钢筋图", floor: "(首层)", last: true },
  { group: "第2层 (3.9~7.8)" },
  { name: "3.900~屋面柱定位图", floor: "(第2层)", last: true },
  { group: "第3层 (7.8~11.7)" },
  { name: "三层板钢筋模板图", floor: "(第3层)" },
  { name: "三层梁配筋图", floor: "(第3层)", last: true },
];

const floors = ["屋顶", "屋面", "第3层", "第2层", "首层", "第-1层", "第-2层", "基础层"];

const RibbonButton = ({ item: [icon, text, state] }) => {
  if (icon === "check") {
    return (
      <CheckItem>
        <CheckBox defaultChecked $solid />
        {text}
      </CheckItem>
    );
  }
  return (
    <SmallButton
      $active={state === "active"}
      $menu={state === "menu"}
      disabled={state === "disabled"}
      aria-label={text || icon}
    >
      <Icon name={icon} />
      {text}
      {state === "menu" && <Caret />}
    </SmallButton>
  );
};

const RibbonGroup = ({ group }) => (
  <Group $width={group.width} $indent={group.indent}>
    <GroupBody>
      {group.big?.map((b) => (
        <BigButton key={b.text} disabled={b.disabled}>
          <svg width="30" height="30" viewBox="0 0 30 30" fill="none">
            {bigIcons[b.icon]}
          </svg>
          {b.text}
          {b.menu && <Caret />}
        </BigButton>
      ))}
      <Columns>
        {group.columns.map((col, i) => (
          <Column key={i}>
            {col.map((item) => (
              <RibbonButton key={item[0]} item={item} />
            ))}
          </Column>
        ))}
      </Columns>
    </GroupBody>
    <GroupLabel>
      {group.label}
      {!group.plain && <Caret $size={4} />}
    </GroupLabel>
  </Group>
);

const WindowHeader = () => (
  <Header>
    <Logo>
      <svg width="30" height="30" viewBox="0 0 30 30">
        <defs>
          <linearGradient id="logo" x2="0" y2="1">
            <stop offset="0" stopColor="#22c0fa" />
            <stop offset="1" stopColor="#0a6fe0" />
          </linearGradient>
        </defs>
        <rect x="1" y="1" width="28" height="28" rx="7" fill="url(#logo)" />
        <path d="M6 7c6 2 12-2 18 0l-1 5c-2-1-3-1-5-1l1 11c-2 2-5 2-6 0l1-11c-3 0-5 0-7 1z" fill="#eef7ff" />
      </svg>
    </Logo>
    <QuickBar>
      {quickIcons.map(([name, caret]) => (
        <QuickButton key={name} aria-label={name}>
          <Icon name={name} />
          {caret && <Caret $color={caret} />}
        </QuickButton>
      ))}
      <QuickButton aria-label="more">
        <svg width="6" height="8" viewBox="0 0 6 8">
          <path d="M0 .500h6" stroke="#555" />
          <path d="M0 4h6L3 7z" fill="#555" />
        </svg>
      </QuickButton>
    </QuickBar>
    <Title>广联达BIM土建计量平台 GTJ2018 - [D:\工作文件\灯塔小学-宿舍楼.GTJ]</Title>
    <WindowControls>
      <button aria-label="minimize">
        <svg width="8" height="9"><path d="M1 7.500h6" stroke="#555" strokeWidth="2" /></svg>
      </button>
      <button aria-label="restore">
        <svg width="9" height="9" fill="none" stroke="#555"><path d="M2.500 2.500V.5h6v5h-2M.5 3.500h6v5h-6zM.5 4.500h6" /></svg>
      </button>
      <button aria-label="close"><CloseMark size={8} color="#444" /></button>
    </WindowControls>
    <TabRow>
      <Tabs>
        {tabs.map((t) => (
          <Tab key={t} $active={t === "建模"}>{t}</Tab>
        ))}
      </Tabs>
      <Tools>
        <SearchBox>
          <input aria-label="search" placeholder="如何布置拱过梁及拱板处的钢筋？" />
          <svg width="11" height="11" fill="none" stroke="#bbb"><circle cx="4.500" cy="4.500" r="4" /><path d="M7.500 7.500l3 3" strokeWidth="2" /></svg>
        </SearchBox>
        <User href="#">
          <svg width="16" height="16">
            <path d="M0 0h16v16H0z" fill="#8cc4f8" />
            <path d="M4 5a4 4 0 018 0l1 1H3zM5 7h6c0 3-1 4-3 4S5 10 5 7zM2 16c0-4 3-4 6-4s6 0 6 4z" fill="#f3f8fd" />
          </svg>
          定相惜
        </User>
        <svg width="14" height="14" fill="#8f8f8f"><path d="M7 0c3 0 4 2 4 5v4l2 2v1H1v-1l2-2V5c0-3 1-5 4-5zM5 12h4a2 2 0 01-4 1z" /></svg>
        <svg width="16" height="14"><path d="M8 1c4 0 7 2 7 5s-3 5-7 5H7l-3 3v-3C2 10 1 8 1 6c0-3 3-5 7-5z" fill="#8f8f8f" /><path d="M4 5h2v2H4zM7 5h2v2H7zM10 5h2v2h-2z" fill="#fff" /></svg>
        <svg width="16" height="14" fill="none"><path d="M1 4c0-4 6-4 6-1 0 2-3 2-3 5M4 10v2" stroke="#8f8f8f" strokeWidth="2" /><path d="M11 6h5l-2.500 3z" fill="#999" /></svg>
        <svg width="15" height="14" fill="#8f8f8f"><path d="M4 1c1 2 5 2 6 0l5 3-2 3-2-1v7H4V6L2 7 0 4z" /></svg>
        <svg width="14" height="14" fill="none" stroke="#8f8f8f"><path d="M.5 1.500h13v11H.5zM1 2.500h12M7 11V6M4.500 8L7 5.500 9.500 8" strokeWidth="1.300" /></svg>
      </Tools>
    </TabRow>
  </Header>
);

const Navigator = () => (
  <NavPanel>
    <NavTitle>导航树</NavTitle>
    <NavTools>
      <button aria-label="expand"><Icon name="plusPlus" size={14} /></button>
      <ViewButton aria-label="list"><Icon name="listView" size={14} /></ViewButton>
      <ViewButton aria-label="card"><Icon name="cardView" /></ViewButton>
    </NavTools>
    <Tree>
      {navTree.map(([icon, text, leaf]) => (
        <TreeRow key={text} $leaf={leaf} $active={text === "梁(L)"}>
          <span><Icon name={icon} />{text}</span>
        </TreeRow>
      ))}
    </Tree>
  </NavPanel>
);

const PadLock = () => (
  <svg width="12" height="14" fill="none" stroke="#777">
    <path d="M2.500 6V4a3.500 3.500 0 017 0v2M.5 6.500h11v7H.5zM1 8.500h10M1 10.500h10M1 12.500h10" />
  </svg>
);

const DrawingManager = () => (
  <Dock>
    <DockStrip><button aria-label="close"><CloseMark /></button></DockStrip>
    <DockTabs>
      <DockTab>构件列表</DockTab>
      <DockTab $active>图纸管理</DockTab>
    </DockTabs>
    <DockTools $gap={13}>
      <button><Icon name="addPage" />添加图纸<Caret /></button>
      <button><Icon name="splitPaper" />分割<Caret /></button>
      <button><Icon name="locate" />定位</button>
      <button><Icon name="removePaper" />删除</button>
    </DockTools>
    <TableArea>
      <DataTable $width={268} $head={25}>
        <colgroup><col width="171" /><col width="36" /><col width="61" /></colgroup>
        <thead>
          <tr><SortedTh>名称</SortedTh><th>锁定</th><th>对应楼层</th></tr>
        </thead>
        <tbody>
          {drawings.map((d) =>
            d.group ? (
              <DrawingRow key={d.group} $group>
                <td colSpan="3">
                  <NameCell>
                    <svg width="13" height="20" fill="none">
                      <path d="M6.500 16v4" stroke="#d0d0d0" />
                      <rect x=".5" y="3.500" width="12" height="12" rx="2" stroke="#888" />
                      <path d="M4 9.500h5" stroke="#333" />
                    </svg>
                    <span>{d.group}</span>
                  </NameCell>
                </td>
              </DrawingRow>
            ) : (
              <DrawingRow key={d.name} $active={d.active}>
                <td>
                  <NameCell>
                    <svg width="23" height="20" fill="none" stroke="#d0d0d0">
                      <path d={d.last ? "M6.500 0v9.500H23" : "M6.500 0v20M6.500 9.500H23"} />
                    </svg>
                    <span>{d.name}</span>
                  </NameCell>
                </td>
                <td><PadLock /></td>
                <td>{d.floor}</td>
              </DrawingRow>
            )
          )}
        </tbody>
      </DataTable>
      <Gutter>
        <svg width="8" height="4"><path d="M0 4l4-4 4 4z" fill="#222" /></svg>
        <Thumb />
        <svg width="8" height="4"><path d="M0 0l4 4 4-4z" fill="#222" /></svg>
      </Gutter>
    </TableArea>
  </Dock>
);

const LayerManager = () => (
  <Dock $fill>
    <DockStrip><button aria-label="close"><CloseMark /></button></DockStrip>
    <DockTabs>
      <DockTab>属性列表</DockTab>
      <DockTab $active>图层管理</DockTab>
    </DockTabs>
    <DockTools $gap={14}>
      <button>显示指定图层</button>
      <button>隐藏指定图层</button>
    </DockTools>
    <LayerHead>
      <DataTable $width={238} $head={21}>
        <colgroup><col width="51" /><col width="36" /><col width="151" /></colgroup>
        <thead>
          <tr><th>开 / 关</th><th>颜色</th><th>名称</th></tr>
        </thead>
        <tbody>
          {["已提取的 CAD 图层", "CAD 原始图层"].map((name, i) => (
            <tr key={name}>
              <td><Cell><CheckBox $partial={i === 0} aria-label={name} /></Cell></td>
              <td>
                <svg width="6" height="9" fill="none" stroke="#888"><path d="M.5 .500l4 4-4 4z" /></svg>
              </td>
              <td><Cell $start>{name}</Cell></td>
            </tr>
          ))}
        </tbody>
      </DataTable>
    </LayerHead>
  </Dock>
);

const AxisMark = ({ x, y, label }) => (
  <g>
    <circle cx={x} cy={y} r="12" fill="none" stroke="#0b870b" />
    <text x={x} y={y + 6} fontSize="17" fill="#fff" textAnchor="middle">{label}</text>
  </g>
);

const green = "#2bde2b";

const Drawing = () => (
  <svg fill="none" fontFamily="'Open Sans', sans-serif">
    <defs>
      <clipPath id="paper"><path d="M0 0h1131v839H0z" /></clipPath>
    </defs>
    <g fill={green}>
      <path d="M464 3h57v836h-57zM1034 55h43v784h-43z" />
      <path d="M3 55h1092v43H3zM3 493h1125v43H3z" />
    </g>
    <g stroke="#e8200c">
      <path d="M492.500 3v836" />
      <path d="M463.500 3l7 6v19l51 26v44l-51 26v22" />
      <path d="M467.500 450v22l50 25v46l-50 24v20" />
      <path d="M994 54.500h21l18 43h44l18-43" />
    </g>
    <path d="M399 382l68 68" stroke="#0a80ff" strokeWidth="1.300" />
    <g fontFamily="'Liberation Sans Narrow', 'Roboto', sans-serif" fontSize="30" fontWeight="300">
      <text transform="translate(389 411) rotate(-90)" fill="#0a6cdc">2C16</text>
      <text x="39" y="841" fill="#b80000" clipPath="url(#paper)">2C18</text>
    </g>
    <AxisMark x={492} y={15} label="26" />
    <AxisMark x={1055} y={15} label="27" />
    <AxisMark x={15} y={592} label="5" />
    <AxisMark x={492} y={827} label="26" />
    <AxisMark x={1055} y={827} label="27" />
    <path d="M51 784v-13h-4l6-12 6 12h-4v13z" fill="#0f0" />
    <path d="M58 787h13v-4l12 6-12 6v-4H58z" fill="#f00" />
    <circle cx="53" cy="789" r="6" fill="#0a0ac8" />
    <text x="53" y="758" fontSize="15" fill="#0f0" textAnchor="middle">Y</text>
    <text x="89" y="794" fontSize="15" fill="#f00" textAnchor="middle">X</text>
  </svg>
);

const ViewTools = () => (
  <ViewBar>
    <button aria-label="orbit">
      <svg width="24" height="22" fill="none">
        <defs>
          <radialGradient id="ball" cx=".35" cy=".3"><stop offset="0" stopColor="#e6eef6" /><stop offset="1" stopColor="#6f86a2" /></radialGradient>
        </defs>
        <circle cx="12" cy="11" r="9.500" fill="url(#ball)" stroke={K} />
        <path d="M2 18c5 1 14-4 19-12" stroke={K} strokeWidth="1.500" />
        <circle cx="20" cy="6" r="3.500" fill="url(#ball)" stroke={K} />
        <circle cx="2.500" cy="18" r="1.500" stroke={K} />
      </svg>
    </button>
    <button aria-label="3D">
      <svg width="24" height="24" fill="none">{cube("#8396b4")}<text x="6" y="20" fontSize="8" fill="#1c2838">3D</text></svg>
    </button>
    <button aria-label="view">
      <svg width="24" height="24" fill="none">{cube("#dcebff")}{line("M6.500 6.500v11h11M6.500 17.500l-5 5", K)}</svg>
      <Caret $color="#2c3a4c" />
    </button>
    <button aria-label="solid">
      <svg width="24" height="24" fill="none">{cube("#8396b4")}</svg>
      <Caret $color="#2c3a4c" />
    </button>
    <button aria-label="spin">
      <svg width="24" height="24" fill="none">{line("M20 17a9.500 9.500 0 11-1-12", K, 2.200)}{shape("M22 1v8h-8z", K)}</svg>
      <Caret $color="#2c3a4c" />
    </button>
    <ViewBarRule />
    <svg width="24" height="24" fill="none">
      {shape("M1.500 4.500l2-3h19v3M1.500 4.500h21v18h-21z", "#8396b4", K)}
      {line("M12.500 8v13M4 7.500l1 1 2-2M15 7.500l1 1 2-2M4.500 10.500h2v2h-2zM4.500 14.500h2v2h-2zM4.500 18.500h2v2h-2zM15.500 10.500h2v2h-2zM15.500 14.500h2v2h-2zM15.500 18.500h2v2h-2zM8 11.500h2M8 15.500h2M8 19.500h2M19 11.500h2M19 15.500h2M19 19.500h2", K)}
    </svg>
  </ViewBar>
);

const CanvasArea = () => (
  <Canvas>
    <Drawing />
    <FloatPanel>
      <FloatHead><button aria-label="close"><CloseMark size={6} color="#b8d4f0" /></button></FloatHead>
      <FloatButton>提取钢筋和标注</FloatButton>
      <FloatButton $menu>点选识别<Caret $size={4} $color="#fff" /></FloatButton>
    </FloatPanel>
    <ViewTools />
    <Dialog role="dialog" aria-label="提示">
      <DialogHead>
        提示
        <button aria-label="close"><CloseMark size={8} color="#fff" width={1.8} /></button>
      </DialogHead>
      <DialogBody>
        <svg width="30" height="30">
          <circle cx="15" cy="15" r="15" fill="#237cd6" />
          <circle cx="17" cy="8" r="2.500" fill="#fff" />
          <path d="M12 13l6-1-3 10c0 1 1 1 2-1l1 1c-2 4-7 4-6 0l2-7-2-1z" fill="#fff" />
        </svg>
        <p>选择的线不是吊筋，或者该位置没有提取梁跨</p>
      </DialogBody>
      <DialogFoot><button>确定</button></DialogFoot>
    </Dialog>
  </Canvas>
);

const DisplaySettings = () => (
  <SettingPanel>
    <DockStrip><button aria-label="close"><CloseMark /></button></DockStrip>
    <SettingTitle>显示设置</SettingTitle>
    <SettingTabs>
      <SettingTab>图元显示</SettingTab>
      <SettingTab $active>楼层显示</SettingTab>
    </SettingTabs>
    <RadioRow>
      {["当前楼层", "相邻楼层", "全部楼层"].map((t, i) => (
        <label key={t}><input type="radio" name="floor" defaultChecked={i === 0} />{t}</label>
      ))}
    </RadioRow>
    <FloorTree>
      <li>
        <svg width="6" height="6"><path d="M6 0v6H0z" fill="#222" /></svg>
        <CheckItem $muted $gap={10}><CheckBox disabled $partial />全部楼层</CheckItem>
      </li>
      {floors.map((f) => (
        <li key={f}>
          <CheckItem $muted $gap={10}><CheckBox disabled defaultChecked={f === "第-1层"} />{f}</CheckItem>
        </li>
      ))}
    </FloorTree>
    <SettingFoot>
      <CheckItem><CheckBox />其他区域图元亮显</CheckItem>
    </SettingFoot>
  </SettingPanel>
);

const Status = () => (
  <StatusBar>
    <StatusText $width={259}>X = 526897 Y = 583326</StatusText>
    <StatusText $width={79}>层高： 5.65</StatusText>
    <StatusText $width={129}>标高： -5.65~0</StatusText>
    <StatusText $width={99}>2</StatusText>
    <StatusText $width={99}>隐藏：0</StatusText>
    <StatusButton aria-label="ortho">
      <svg width="12" height="14" fill="none" stroke="#333"><path d="M1.500 1v11.500H12M1.500 9.500h3v3" /></svg>
    </StatusButton>
    <StatusButton $active aria-label="snap">
      <svg width="16" height="16" fill="none"><path d="M2.500 2.500h12v12h-12z" stroke={B} /><path d="M.5 .500h5v4h-5z" fill="#fbc49a" stroke={O} /></svg>
      <Caret />
    </StatusButton>
    <StatusButton aria-label="cross">
      <svg width="12" height="14" fill="none" stroke="#888"><path d="M0 1l12 12M12 1L0 13" /></svg>
    </StatusButton>
    <StatusButton aria-label="angle">
      <svg width="16" height="14" fill="none" stroke="#333"><path d="M13 1L2 12.500h13" /><circle cx="8" cy="7" r="1.500" fill="#333" /></svg>
      <Caret />
    </StatusButton>
    <StatusButton aria-label="input">
      <svg width="16" height="14" fill="none"><path d="M4.500 1v8M0 4.500h9" stroke="#333" /><path d="M6 9h10v4H6z" fill="#333" /></svg>
      <Caret />
    </StatusButton>
    <StatusButton $active>跨图层选择</StatusButton>
    <StatusButton>折线选择</StatusButton>
    <StatusText $indent={3}>左键选择CAD图中的吊筋或次梁加筋线（可以连续点选多处）&lt;右键识别/Esc放弃&gt;</StatusText>
    <StatusText $push>1000 FPS</StatusText>
  </StatusBar>
);

const Tasks = () => (
  <TaskBar>
    <TaskItem $from="#a9b3c4" $to="#8b99b0" />
    <TaskItem $from="#a9b3c4" $to="#8090aa" />
    <TaskItem $from="#dfe5f0" $to="#c9cfdb" />
    <TaskItem $from="#9aa8be" $to="#8090aa" />
    <Desktop />
    <svg width="700" height="8">
      <path d="M13 8a14 14 0 0127 0z" fill="#b9d2ea" stroke="#23405f" />
      <path d="M74 8a12 10 0 0122-3l4-4 4 7z" fill="#2ca0f0" />
      <path d="M92 8l8-7 4 7z" fill="#f6b81e" />
      <path d="M131 3l12 2 7 3h-19z" fill="#f7e29a" />
      <path d="M290 8V6q0-2 3-2h27q3 0 3 2v2z" fill="#2c6fb8" />
      <path d="M452 8V6q0-2 3-2h27q3 0 3 2v2z" fill="#6ab0fa" />
      <path d="M620 8a12 9 0 0122 0z" fill="#1f8fe8" />
    </svg>
  </TaskBar>
);

const App = () => {
  return (
    <Page>
      <GlobalStyle />
      <WindowHeader />
      <Ribbon>
        {ribbonGroups.map((g) => (
          <RibbonGroup key={g.label} group={g} />
        ))}
      </Ribbon>
      <ComboBar>
        {combos.map((c, i) => (
          <Combo key={i}>
            <select aria-label={c}><option>{c}</option></select>
            <Caret />
          </Combo>
        ))}
      </ComboBar>
      <Main>
        <Navigator />
        <DockColumn>
          <DrawingManager />
          <LayerManager />
        </DockColumn>
        <Splitter><svg width="4" height="6"><path d="M4 0v6L0 3z" fill="#c8ccd0" /></svg></Splitter>
        <CanvasArea />
        <Splitter><svg width="4" height="6"><path d="M0 0v6l4-3z" fill="#c8ccd0" /></svg></Splitter>
        <DisplaySettings />
      </Main>
      <Status />
      <Tasks />
    </Page>
  );
};

export default App;
